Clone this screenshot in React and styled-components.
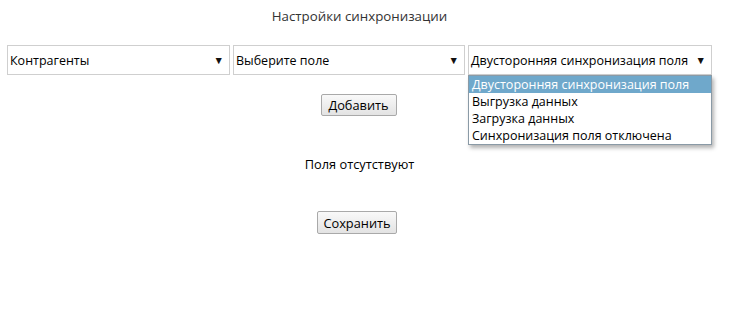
import React from "react";
import styled, { createGlobalStyle } from "styled-components";

const Global = createGlobalStyle`
  html, body { margin: 0; padding: 0; background: #fff; }
  body { font-family: "Open Sans", "Liberation Sans", sans-serif; font-size: 12.8px; color: #000; }
`;

const Page = styled.div`
  width: 705px;
  margin-left: 7px;
  display: flex;
  flex-direction: column;
  align-items: center;
`;

const Title = styled.h1`
  margin: 7px 0 0;
  font-size: 13.3px;
  font-weight: normal;
  line-height: 18px;
  color: #333;
`;

const SelectRow = styled.div`
  margin-top: 20px;
  align-self: stretch;
  display: flex;
  gap: 3px;
`;

const SelectWrap = styled.div`
  position: relative;
  width: ${(p) => p.$w}px;
  font-size: 12.5px;
`;

const SelectBox = styled.div`
  box-sizing: border-box;
  height: 30px;
  border: 1px solid #cfcfcf;
  background: #fff;
  display: flex;
  align-items: center;
  justify-content: space-between;
  padding: 0 5px 0 2px;
  white-space: nowrap;
`;

const Arrow = styled.span`
  font-size: 10.5px;
  color: #111;
  line-height: 1;
`;

const Menu = styled.ul`
  position: absolute;
  top: 30px;
  left: 0;
  right: 0;
  margin: 0;
  padding: 0;
  list-style: none;
  background: #fff;
  border: 1px solid #8a9aa6;
  box-shadow: 2px 3px 4px rgba(0, 0, 0, 0.3);
  z-index: 2;
`;

const Option = styled.li`
  height: 17px;
  line-height: 17px;
  padding: 0 3px;
  white-space: nowrap;
  background: ${(p) => (p.$active ? "#6fa8cb" : "transparent")};
  color: ${(p) => (p.$active ? "#fff" : "#000")};
`;

const Button = styled.button`
  box-sizing: border-box;
  margin-top: ${(p) => p.$mt}px;
  margin-right: ${(p) => p.$shift || 0}px;
  width: ${(p) => p.$w}px;
  height: ${(p) => p.$h}px;
  padding: 0;
  font-family: inherit;
  font-size: 12.8px;
  color: #000;
  border: 1px solid #a9a9a9;
  border-radius: 2px;
  background: linear-gradient(#f9f9f9, #e3e3e3);
`;

const Empty = styled.div`
  margin-top: 39px;
  line-height: 18px;
`;

const Select = ({ w, value, options }) => (
  <SelectWrap $w={w}>
    <SelectBox>
      <span>{value}</span>
      <Arrow>▼</Arrow>
    </SelectBox>
    {options && (
      <Menu>
        {options.map((o, i) => (
          <Option key={o} $active={i === 0}>
            {o}
          </Option>
        ))}
      </Menu>
    )}
  </SelectWrap>
);

export default function App() {
  return (
    <>
      <Global />
      <Page>
        <Title>Настройки синхронизации</Title>
        <SelectRow>
          <Select w={223} value="Контрагенты" />
          <Select w={232} value="Выберите поле" />
          <Select
            w={244}
            value="Двусторонняя синхронизация поля"
            options={[
              "Двусторонняя синхронизация поля",
              "Выгрузка данных",
              "Загрузка данных",
              "Синхронизация поля отключена",
            ]}
          />
        </SelectRow>
        <Button $mt={19} $w={76} $h={22} $shift={2}>Добавить</Button>
        <Empty>Поля отсутствуют</Empty>
        <Button $mt={38} $w={80} $h={23} $shift={5}>Сохранить</Button>
      </Page>
    </>
  );
}
